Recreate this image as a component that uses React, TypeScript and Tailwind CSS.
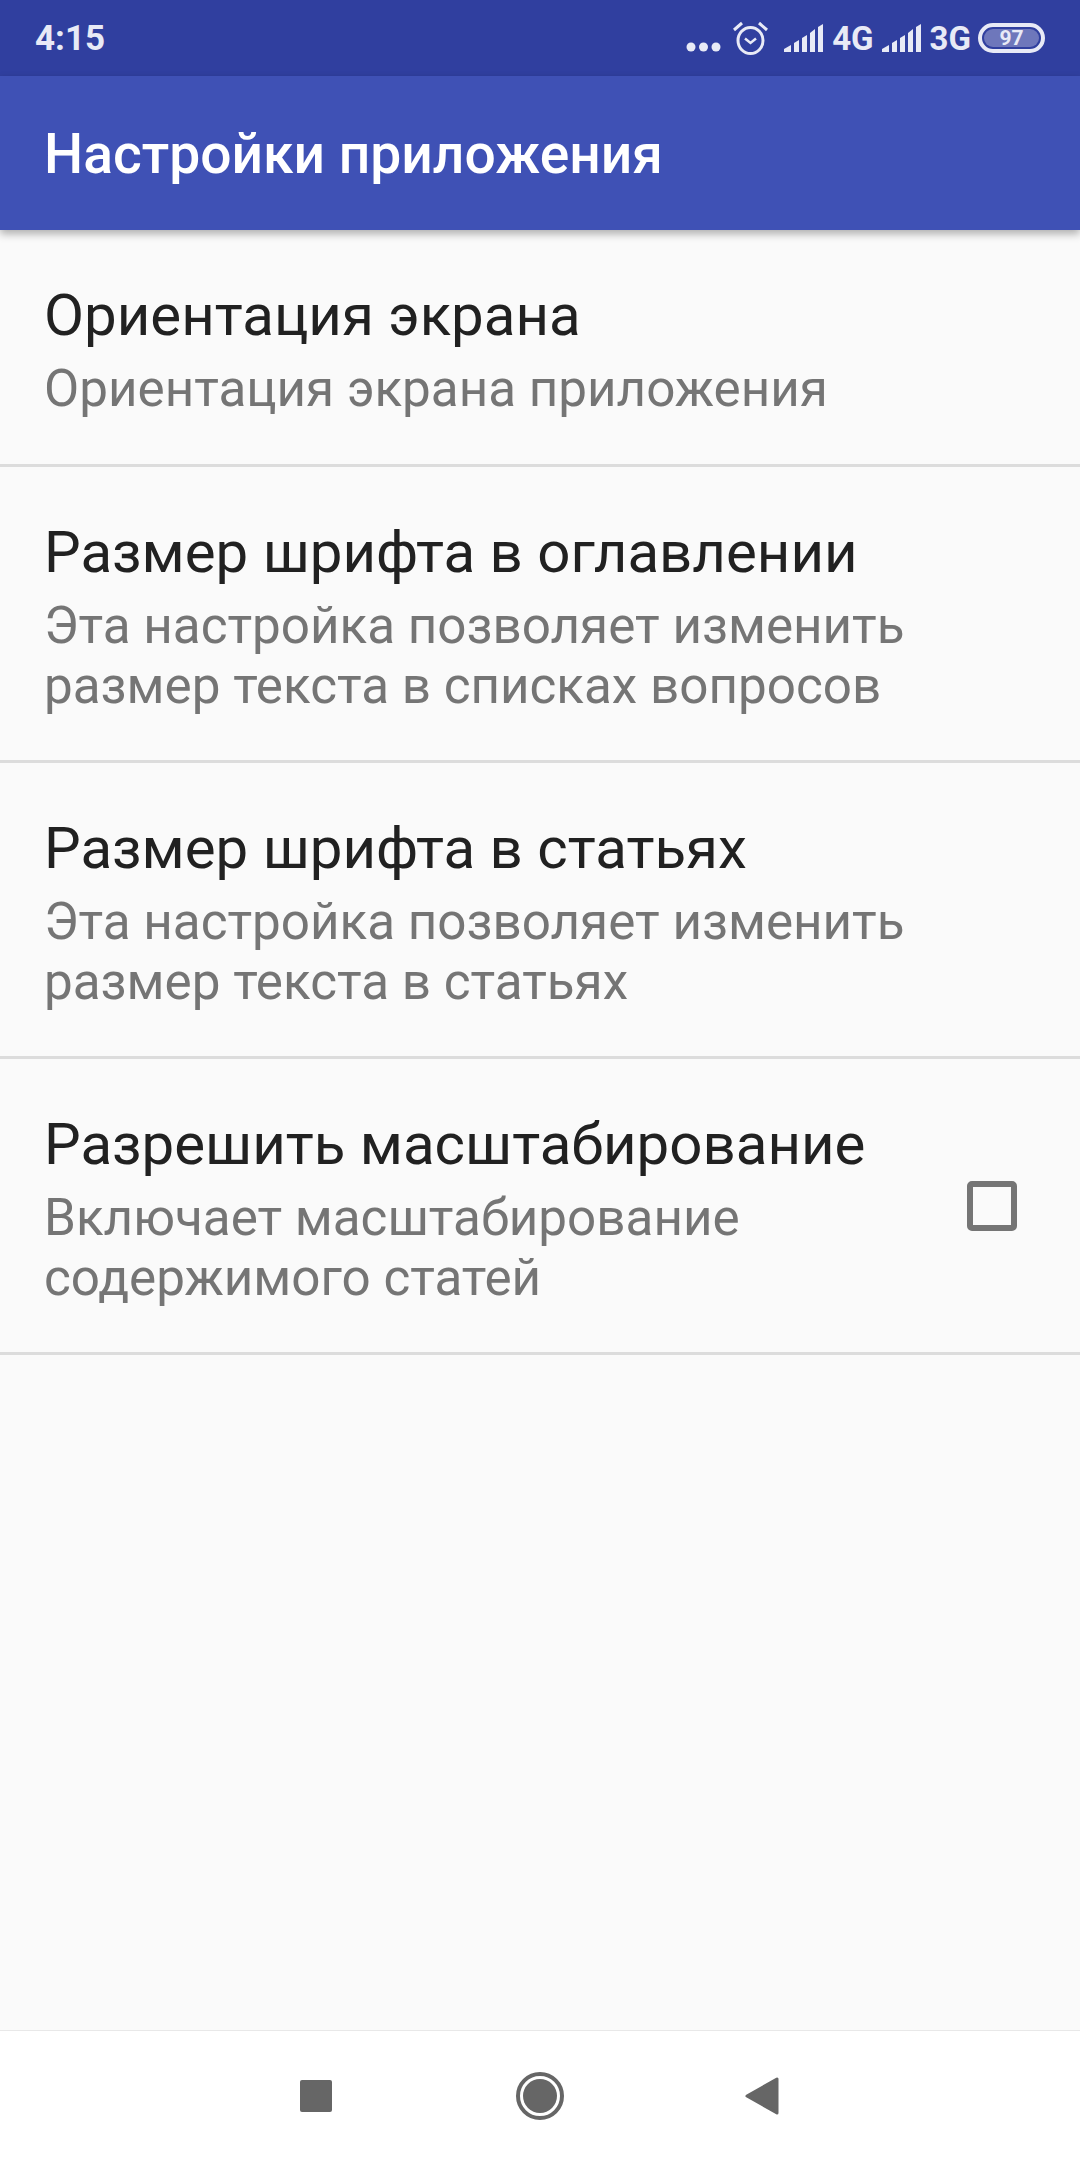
const rows = [
  { title: 'Ориентация экрана', lines: ['Ориентация экрана приложения'], height: 'h-[237px]' },
  { title: 'Размер шрифта в оглавлении', lines: ['Эта настройка позволяет изменить', 'размер текста в списках вопросов'], height: 'h-[296px]' },
  { title: 'Размер шрифта в статьях', lines: ['Эта настройка позволяет изменить', 'размер текста в статьях'], height: 'h-[296px]' },
  { title: 'Разрешить масштабирование', lines: ['Включает масштабирование', 'содержимого статей'], height: 'h-[296px]', checkbox: true },
]

function Signal() {
  return (
    <svg width="40" height="30" viewBox="0 0 40 30" fill="#e8eaf6">
      <path d="M0 29V26L7 22V29Z" />
      <path d="M10 29V20L15 17V29Z" />
      <path d="M18 29V15L23 12V29Z" />
      <path d="M26 29V10L31 6V29Z" />
      <path d="M34 29V4L39 1V29Z" />
    </svg>
  )
}

function StatusIcons() {
  return (
    <div className="flex items-center text-[#e8eaf6] font-bold text-[33px] leading-none">
      <svg width="35" height="12" viewBox="0 0 35 12" fill="#e8eaf6" className="mt-[18px] mr-[12px]">
        <circle cx="5" cy="6" r="4.5" />
        <circle cx="17.5" cy="6" r="4.5" />
        <circle cx="30" cy="6" r="4.5" />
      </svg>
      <svg width="35" height="34" viewBox="0 0 35 34" fill="none" stroke="#e8eaf6" className="mr-[16px]">
        <ellipse cx="17.5" cy="19.5" rx="12.5" ry="13" strokeWidth="3" />
        <path d="M12 17.5l5.500 4.500 5.500-4.500" strokeWidth="2.500" />
        <path d="M1 9l8-7M34 9l-8-7" strokeWidth="3" />
      </svg>
      <Signal />
      <span className="ml-[8px] mr-[8px]">4G</span>
      <Signal />
      <span className="ml-[8px] mr-[7px]">3G</span>
      <div className="w-[67px] h-[30px] rounded-full border-[4px] border-[#e8eaf6] p-[2px]">
        <div className="h-full w-full rounded-full bg-[#6e77bb] flex items-center justify-center text-[21px] leading-none font-bold">97</div>
      </div>
    </div>
  )
}

export default function App() {
  return (
    <div className="w-[1080px] h-[2160px] flex flex-col bg-[#fafafa] overflow-hidden" style={{ fontFamily: 'Roboto, sans-serif' }}>
      <div className="h-[76px] bg-[#303f9f] flex items-center justify-between pl-[35px] pr-[35px] shrink-0">
        <span className="text-[#e8eaf6] font-bold text-[35px] leading-none">4:15</span>
        <StatusIcons />
      </div>
      <div className="h-[154px] bg-[#3f51b5] flex items-center pl-[44px] pt-[3px] shrink-0 shadow-[0_4px_8px_rgba(0,0,0,0.3)] relative">
        <h1 className="text-white font-medium text-[55.2px] leading-none">Настройки приложения</h1>
      </div>
      <div className="flex-1">
        {rows.map((row) => (
          <div key={row.title} className={`${row.height} border-b-[3px] border-[#dcdcdc] flex items-center pl-[44px] pr-[63px]`}>
            <div className="flex-1">
              <div className="text-[#212121] text-[58.2px] leading-[81px] mb-[3px]">{row.title}</div>
              {row.lines.map((line) => (
                <div key={line} className="text-[#757575] text-[51.2px] leading-[60px]">{line}</div>
              ))}
            </div>
            {row.checkbox && <div className="w-[50px] h-[50px] border-[6px] border-[#757575] rounded-[5px]" />}
          </div>
        ))}
      </div>
      <div className="h-[130px] bg-white border-t border-[#e8e8e8] flex items-center pl-[300px] shrink-0">
        <div className="w-[32px] h-[32px] bg-[#666666] rounded-[2px] mr-[184px]" />
        <div className="w-[48px] h-[48px] rounded-full border-[4px] border-[#666666] p-[3px] mr-[181px]">
          <div className="w-full h-full rounded-full bg-[#666666]" />
        </div>
        <svg width="34" height="38" viewBox="0 0 34 38" fill="#666666" stroke="#666666" strokeWidth="3" strokeLinejoin="round">
          <path d="M2 19L32 2V36Z" />
        </svg>
      </div>
    </div>
  )
}
